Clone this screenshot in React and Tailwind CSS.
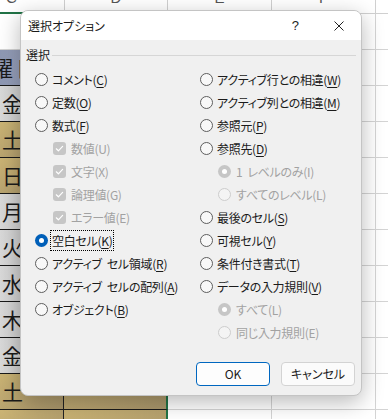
import React from "react";

const ROWS = [
  { kind: "white", t: "" },
  { kind: "blue", t: "曜日" },
  { kind: "gray", t: "金" },
  { kind: "tan", t: "土" },
  { kind: "tan", t: "日" },
  { kind: "gray", t: "月" },
  { kind: "gray", t: "火" },
  { kind: "gray", t: "水" },
  { kind: "gray", t: "木" },
  { kind: "gray", t: "金" },
  { kind: "tan", t: "土" },
  { kind: "tan", t: "日" },
];

function fillClass(kind) {
  if (kind === "blue") return "bg-gradient-to-r from-[#8e98b4] to-[#a9b1c6]";
  if (kind === "gray") return "bg-gradient-to-r from-[#d9d9d9] to-[#b9b9b9]";
  if (kind === "tan") return "bg-gradient-to-br from-[#cbb474] to-[#a8956b]";
  return "bg-white";
}

function Sheet() {
  return (
    <div className="flex flex-col">
      <div className="flex h-[14px] overflow-hidden bg-white text-[#555] text-[15px] leading-[15px] font-['Liberation_Sans',sans-serif]">
        <div className="w-[65px] shrink-0 border-r border-[#d0d0d0] border-b-2 border-b-[#217346] pl-[6px]">
          <span className="block mt-[-10px]">C</span>
        </div>
        <div className="w-[103px] shrink-0 border-r border-[#d0d0d0] border-b-2 border-b-[#217346] flex justify-center">
          <span className="block mt-[-10px]">D</span>
        </div>
        <div className="w-[104px] shrink-0 border-r border-[#d0d0d0] border-b border-b-[#d0d0d0] flex justify-center">
          <span className="block mt-[-10px]">E</span>
        </div>
        <div className="w-[104px] shrink-0 border-r border-[#d0d0d0] border-b border-b-[#d0d0d0] flex justify-center">
          <span className="block mt-[-10px]">F</span>
        </div>
        <div className="flex-1 border-b border-b-[#d0d0d0]" />
      </div>
      {ROWS.map((r, i) => (
        <div key={i} className="flex h-[36px] shrink-0">
          <div
            className={`w-[64px] shrink-0 border-r border-[#222] ${
              r.kind === "white" ? "border-b border-b-[#d4d4d4]" : "border-b border-b-[#1a1a1a]"
            } ${fillClass(r.kind)} flex items-center overflow-hidden`}
          >
            {r.t && (
              <span
                className={`text-[21px] leading-none text-[#1a1a1a] font-['Noto_Sans_CJK_JP',sans-serif] whitespace-nowrap ${
                  r.t.length > 1 ? "ml-[-8px] tracking-[3px]" : "ml-[2px]"
                }`}
              >
                {r.t}
              </span>
            )}
          </div>
          <div
            className={`w-[104px] shrink-0 border-r-2 border-r-[#217346] ${
              r.kind === "white" ? "border-b border-b-[#d4d4d4]" : "border-b border-b-[#1a1a1a]"
            } ${fillClass(r.kind)}`}
          />
          <div className="w-[104px] shrink-0 border-r border-b border-[#d4d4d4]" />
          <div className="w-[104px] shrink-0 border-r border-b border-[#d4d4d4]" />
          <div className="flex-1 border-b border-[#d4d4d4]" />
        </div>
      ))}
    </div>
  );
}

function Radio({ checked, disabled }) {
  if (checked && !disabled)
    return (
      <span className="w-[13px] h-[13px] rounded-full bg-[#005fb8] flex items-center justify-center shrink-0">
        <span className="w-[5px] h-[5px] rounded-full bg-white" />
      </span>
    );
  if (checked && disabled)
    return (
      <span className="w-[13px] h-[13px] rounded-full bg-[#c6c6c6] flex items-center justify-center shrink-0">
        <span className="w-[5px] h-[5px] rounded-full bg-white" />
      </span>
    );
  if (disabled)
    return <span className="w-[13px] h-[13px] rounded-full border border-[#cdcdcd] bg-[#f4f4f4] shrink-0" />;
  return <span className="w-[13px] h-[13px] rounded-full border border-[#5e5e5e] bg-[#f8f8f8] shrink-0" />;
}

function Check() {
  return (
    <span className="w-[13px] h-[13px] rounded-[3px] bg-[#c6c6c6] flex items-center justify-center shrink-0">
      <svg width="13" height="13" viewBox="0 0 13 13">
        <path d="M3.3 6.8 L5.4 8.8 L9.6 4.4" stroke="white" strokeWidth="1.2" fill="none" strokeLinecap="round" strokeLinejoin="round" />
      </svg>
    </span>
  );
}

function Text({ t }) {
  const parts = t.split(" ");
  return parts.map((p, i) => (
    <React.Fragment key={i}>
      {i > 0 && <span className="inline-block w-[5px]" />}
      {p}
    </React.Fragment>
  ));
}

function Label({ t, k, disabled, focus }) {
  const cls = disabled ? "text-[#a2a2a2]" : "text-[#1b1b1b]";
  const content = (
    <>
      <Text t={t} />(
      {disabled ? k : <u className="underline underline-offset-[2px] decoration-1">{k}</u>})
    </>
  );
  if (focus)
    return (
      <span className={`${cls} border border-dotted border-black h-[21px] px-[1px] ml-[-2px] flex items-center whitespace-nowrap tracking-[-0.3px]`}>
        {content}
      </span>
    );
  return <span className={`${cls} whitespace-nowrap tracking-[-0.3px]`}>{content}</span>;
}

function Row({ type, checked, disabled, indent, t, k, focus }) {
  return (
    <div className={`flex items-center h-[23px] ${indent ? "pl-[18px]" : ""} ${type === "check" || indent ? "gap-[5px]" : "gap-[4px]"}`}>
      {type === "check" ? <Check /> : <Radio checked={checked} disabled={disabled} />}
      <Label t={t} k={k} disabled={disabled} focus={focus} />
    </div>
  );
}

const LEFT = [
  { t: "コメント", k: "C" },
  { t: "定数", k: "O" },
  { t: "数式", k: "F" },
  { type: "check", t: "数値", k: "U", disabled: true, indent: true },
  { type: "check", t: "文字", k: "X", disabled: true, indent: true },
  { type: "check", t: "論理値", k: "G", disabled: true, indent: true },
  { type: "check", t: "エラー値", k: "E", disabled: true, indent: true },
  { t: "空白セル", k: "K", checked: true, focus: true },
  { t: "アクティブ セル領域", k: "R" },
  { t: "アクティブ セルの配列", k: "A" },
  { t: "オブジェクト", k: "B" },
];

const RIGHT = [
  { t: "アクティブ行との相違", k: "W" },
  { t: "アクティブ列との相違", k: "M" },
  { t: "参照元", k: "P" },
  { t: "参照先", k: "D" },
  { t: "1 レベルのみ", k: "I", disabled: true, checked: true, indent: true },
  { t: "すべてのレベル", k: "L", disabled: true, indent: true },
  { t: "最後のセル", k: "S" },
  { t: "可視セル", k: "Y" },
  { t: "条件付き書式", k: "T" },
  { t: "データの入力規則", k: "V" },
  { t: "すべて", k: "L", disabled: true, checked: true, indent: true },
  { t: "同じ入力規則", k: "E", disabled: true, indent: true },
];

function Dialog() {
  return (
    <div className="absolute left-[20px] top-[10px] w-[342px] h-[386px] rounded-[8px] border border-[#c4c4c4] bg-[#f0f0f0] shadow-[0_6px_22px_rgba(0,0,0,0.28)] flex flex-col overflow-hidden text-[12px] leading-none font-['Noto_Sans_CJK_JP',sans-serif] [font-feature-settings:'palt']">
      <div className="h-[29px] bg-white flex items-center pl-[7px] shrink-0">
        <span className="text-[#1b1b1b] text-[12px]">選択オプション</span>
        <span className="ml-auto mr-[35px] text-[13px] text-[#222] font-['Liberation_Sans',sans-serif]">?</span>
        <svg width="10" height="10" viewBox="0 0 10 10" className="mr-[17px]">
          <path d="M0.5 0.5 L9.5 9.5 M9.5 0.5 L0.5 9.5" stroke="#222" strokeWidth="1" />
        </svg>
      </div>
      <div className="flex items-center h-[18px] mt-[6px] pl-[5px] pr-[5px] gap-[2px] shrink-0">
        <span className="text-[#1b1b1b]">選択</span>
        <span className="flex-1 h-px bg-[#d6d6d6]" />
      </div>
      <div className="grid grid-cols-[165px_1fr] pl-[14px] mt-[4px]">
        <div className="flex flex-col">
          {LEFT.map((r, i) => (
            <Row key={i} {...r} />
          ))}
        </div>
        <div className="flex flex-col">
          {RIGHT.map((r, i) => (
            <Row key={i} {...r} />
          ))}
        </div>
      </div>
      <div className="mt-auto flex justify-end gap-[11px] pr-[6px] pb-[9px]">
        <button className="w-[74px] h-[24px] rounded-[4px] border border-[#0067c0] bg-[#fdfdfd] text-[12px] text-[#1b1b1b] flex items-center justify-center font-['Noto_Sans_CJK_JP',sans-serif]">
          OK
        </button>
        <button className="w-[74px] h-[24px] rounded-[4px] border border-[#d3d3d3] bg-[#fbfbfb] text-[12px] text-[#1b1b1b] flex items-center justify-center font-['Noto_Sans_CJK_JP',sans-serif] [font-feature-settings:'palt']">
          キャンセル
        </button>
      </div>
    </div>
  );
}

export default function App() {
  return (
    <div className="relative w-[388px] h-[419px] overflow-hidden bg-white">
      <Sheet />
      <Dialog />
    </div>
  );
}
